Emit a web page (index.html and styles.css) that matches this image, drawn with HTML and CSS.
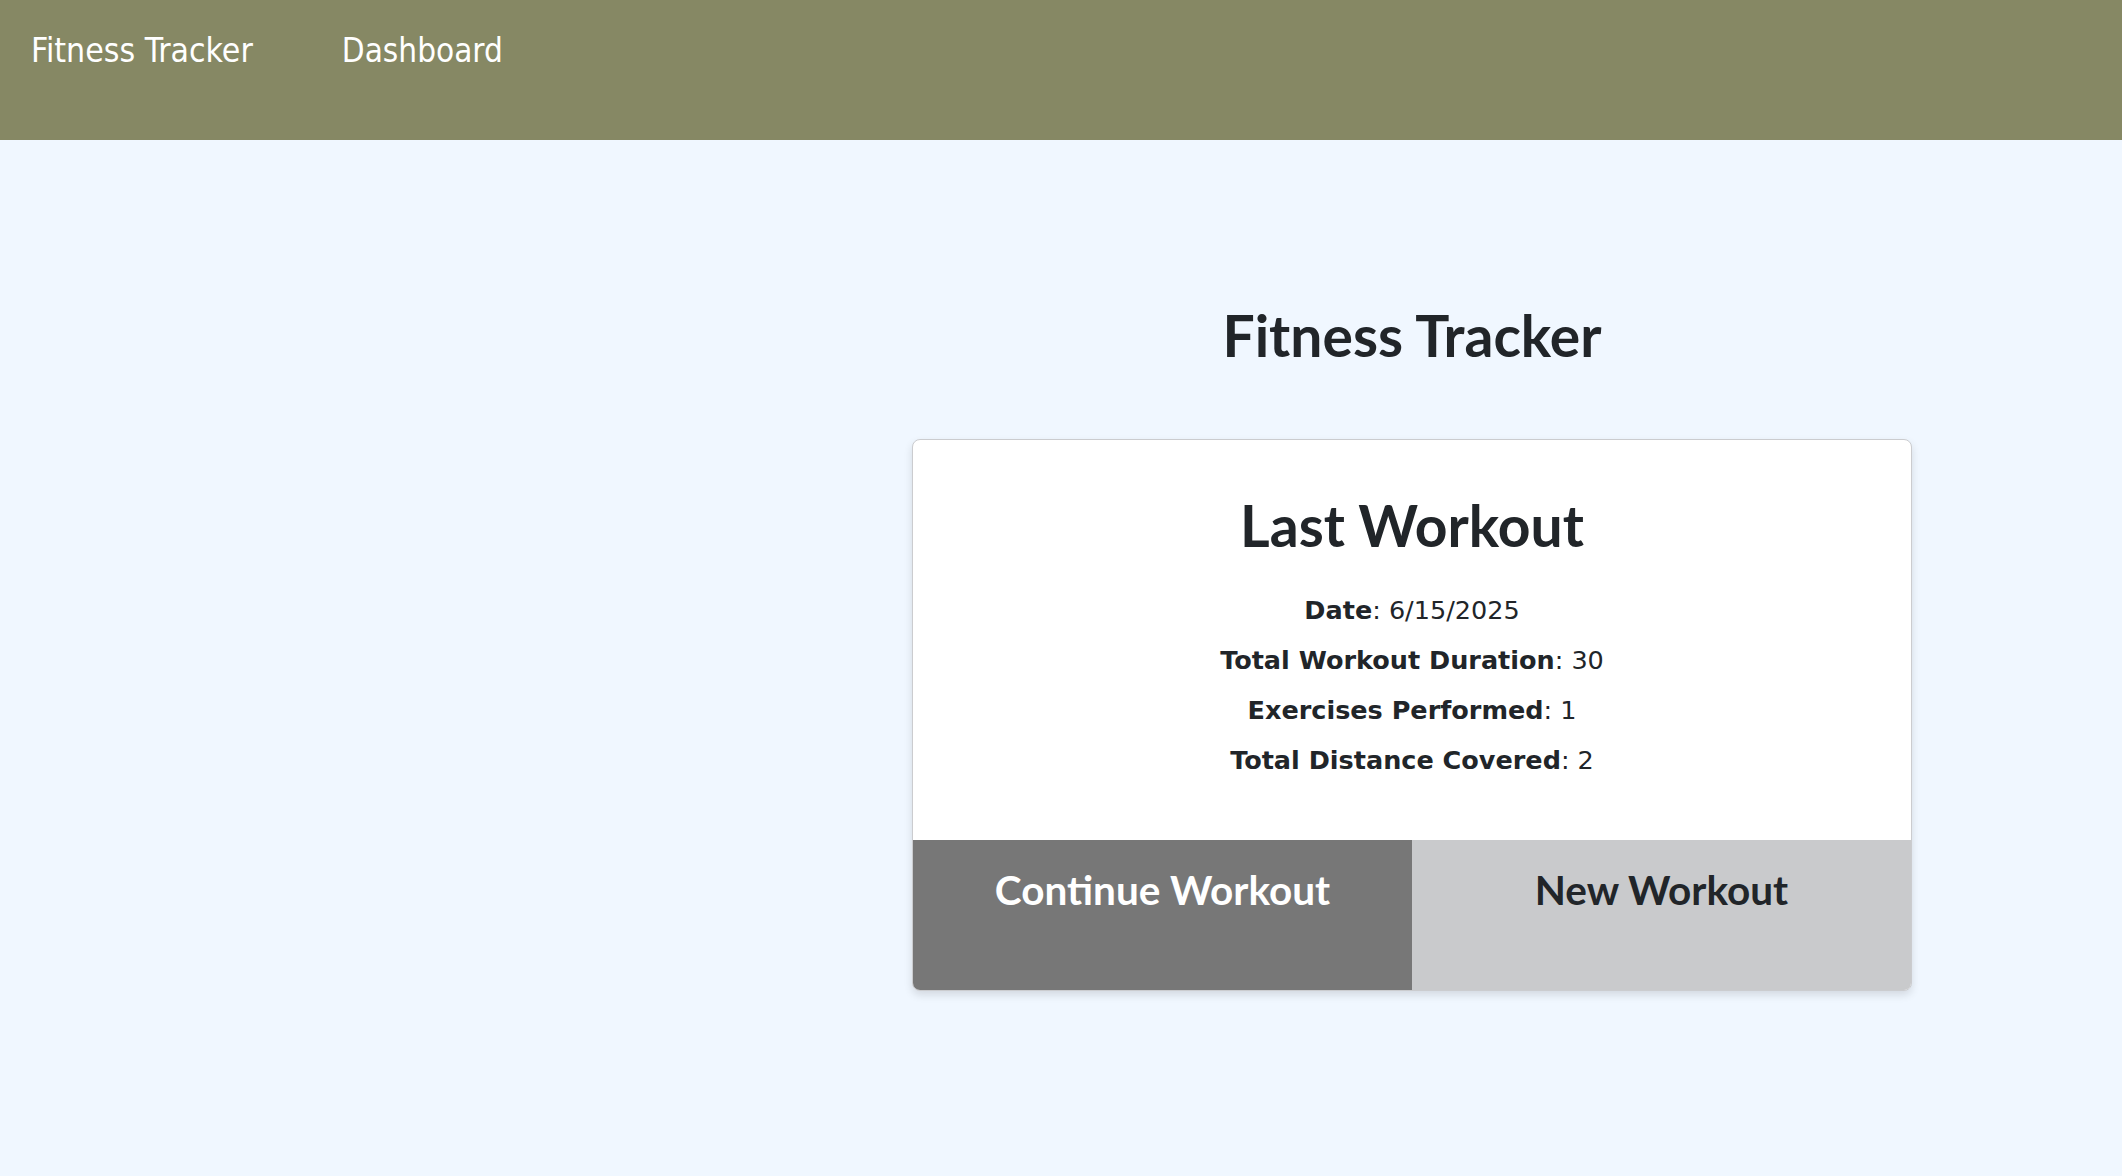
FILE: index.html
```html
<!DOCTYPE html>
<html lang="en">
<head>
<meta charset="utf-8">
<title>Fitness Tracker</title>
<link rel="stylesheet" href="styles.css">
</head>
<body>
<nav class="topnav">
  <a class="brand" href="#">Fitness Tracker</a>
  <a class="navlink" href="#">Dashboard</a>
</nav>
<main class="page">
  <div class="column">
    <h1 class="title">Fitness Tracker</h1>
    <section class="card">
      <div class="card-body">
        <h2 class="card-title">Last Workout</h2>
        <p class="stat"><strong>Date</strong>: 6/15/2025</p>
        <p class="stat"><strong>Total Workout Duration</strong>: 30</p>
        <p class="stat"><strong>Exercises Performed</strong>: 1</p>
        <p class="stat"><strong>Total Distance Covered</strong>: 2</p>
      </div>
      <div class="actions">
        <button class="btn btn-continue">Continue Workout</button>
        <button class="btn btn-new">New Workout</button>
      </div>
    </section>
  </div>
</main>
</body>
</html>
```
FILE: styles.css
```css
* { box-sizing: border-box; }
html, body { margin: 0; padding: 0; }
body {
  background: #f0f7ff;
  color: #212529;
  font-family: "DejaVu Sans", sans-serif;
  min-height: 1176px;
}
.topnav {
  height: 140px;
  background: #868864;
  display: flex;
  align-items: flex-start;
  padding: 27px 0 0 31px;
  gap: 89px;
}
.topnav a {
  color: #ffffff;
  text-decoration: none;
  font-family: "DejaVu Sans Condensed", "DejaVu Sans", sans-serif;
  font-size: 33.5px;
  line-height: 48px;
}
.topnav .navlink { font-size: 33px; }
.page {
  display: grid;
  grid-template-columns: 1fr 1000px 210px;
  padding-top: 162px;
}
.column {
  grid-column: 2;
  display: flex;
  flex-direction: column;
}
.title {
  margin: 0 0 70px;
  font-family: Lato, sans-serif;
  font-weight: 700;
  font-size: 57px;
  line-height: 67px;
  text-align: center;
  color: #212529;
}
.card {
  background: #ffffff;
  border: 1px solid #cbcccf;
  border-radius: 8px;
  overflow: hidden;
  box-shadow: 0 4px 8px rgba(0, 0, 0, 0.12);
}
.card-body {
  padding: 52px 20px 55px;
  text-align: center;
}
.card-title {
  margin: 0 0 26px;
  font-family: Lato, sans-serif;
  font-weight: 700;
  font-size: 57px;
  line-height: 67px;
  color: #212529;
}
.stat {
  margin: 0;
  font-family: "DejaVu Sans", sans-serif;
  font-size: 25.5px;
  line-height: 50px;
  color: #212529;
}
.stat strong { font-weight: 700; }
.actions {
  display: grid;
  grid-template-columns: 1fr 1fr;
  height: 150px;
}
.btn {
  border: 0;
  margin: 0;
  padding: 26px 0 0;
  text-align: center;
  font-family: Lato, sans-serif;
  font-weight: 700;
  font-size: 40.5px;
  line-height: 48px;
  cursor: pointer;
  display: flex;
  justify-content: center;
  align-items: flex-start;
}
.btn-continue { background: #777777; color: #ffffff; }
.btn-new { background: #c9cacc; color: #212529; }
```
